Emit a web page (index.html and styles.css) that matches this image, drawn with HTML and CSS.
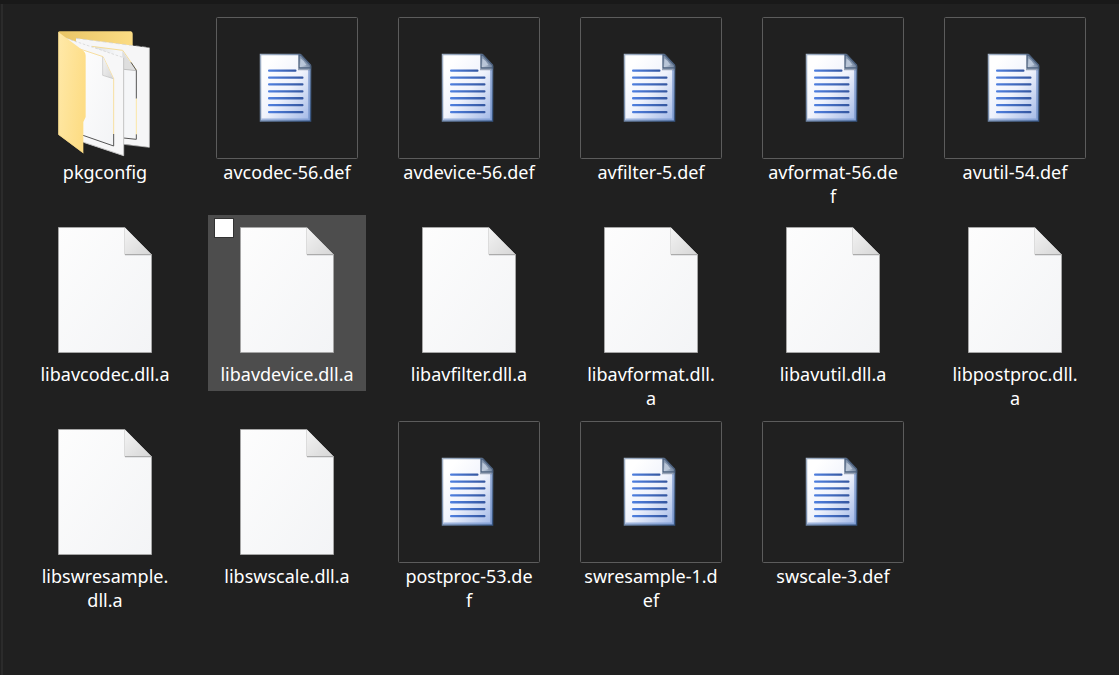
FILE: index.html
```
<!DOCTYPE html>
<html lang="en">
<head>
<meta charset="utf-8">
<title>lib</title>
<link rel="stylesheet" href="styles.css">
</head>
<body>
<svg class="defs" aria-hidden="true">
  <defs>
    <linearGradient id="paper" x1="0" y1="0" x2="1" y2="1"><stop offset="0" stop-color="#fdfdfd"/><stop offset="1" stop-color="#f3f4f6"/></linearGradient>
    <linearGradient id="fold" x1="0" y1="0" x2="1" y2="1"><stop offset="0" stop-color="#f4f4f4"/><stop offset="1" stop-color="#d6d6d6"/></linearGradient>
    <linearGradient id="page" x1="0.2" y1="0.1" x2="1" y2="1"><stop offset="0" stop-color="#ffffff"/><stop offset="0.45" stop-color="#f0f3fc"/><stop offset="1" stop-color="#9fb6e6"/></linearGradient>
    <linearGradient id="edge" x1="0" y1="0" x2="1" y2="1"><stop offset="0" stop-color="#a3b2c6"/><stop offset="1" stop-color="#35537f"/></linearGradient>
    <linearGradient id="curl" x1="0" y1="1" x2="1" y2="0"><stop offset="0" stop-color="#d5deeb"/><stop offset="0.5" stop-color="#7d8fa8"/><stop offset="1" stop-color="#26374c"/></linearGradient>
    <linearGradient id="rule" x1="0" y1="0" x2="1" y2="0"><stop offset="0" stop-color="#4f80e0"/><stop offset="1" stop-color="#34569f"/></linearGradient>
    <linearGradient id="back" x1="0" y1="0" x2="1" y2="0"><stop offset="0" stop-color="#e9c566"/><stop offset="1" stop-color="#fbdc84"/></linearGradient>
    <linearGradient id="front" x1="0" y1="0" x2="1" y2="0.4"><stop offset="0" stop-color="#ffe9a9"/><stop offset="1" stop-color="#fddd86"/></linearGradient>
    <linearGradient id="sheet" x1="0" y1="0" x2="1" y2="0"><stop offset="0" stop-color="#dcdee0"/><stop offset="0.5" stop-color="#f5f6f8"/></linearGradient>
    <symbol id="file" viewBox="0 0 142 142">
      <path d="M24.500 8.500H91L117.500 35.500V133.500H24.500Z" fill="url(#paper)"/>
      <path d="M91 8.500H24.500V133.500H117.500V35.500" fill="none" stroke="#a6a6a6"/>
      <path d="M90.500 9L117.500 35.500H90.500Z" fill="url(#fold)"/>
      <path d="M90.500 9V35.500" stroke="#dcdcdc"/>
      <path d="M91 35.500H117.500" stroke="#ababab"/>
      <path d="M91 36.500H117" stroke="#e3e4e6"/>
    </symbol>
    <symbol id="def" viewBox="0 0 142 142">
      <rect x="0.500" y="0.500" width="141" height="141" rx="1" fill="none" stroke="#5c5c5c"/>
      <path d="M44.500 37.500H84L94.500 49V104H44.500Z" fill="url(#page)" stroke="url(#edge)" stroke-width="1.500"/>
      <path d="M45.500 102.500H93V53" fill="none" stroke="#6f8fc8" stroke-opacity="0.600" stroke-width="2"/>
      <path d="M82 52.500H94" stroke="#2c4262" stroke-opacity="0.450" stroke-width="1.500"/>
      <path d="M83 38H85L94.500 48V51H83Z" fill="url(#curl)" stroke="#4a5f7c" stroke-width="1.300"/>
      <path d="M84.500 41.500Q88 43.500 90.500 48Q87 49.500 84.500 49Z" fill="#b9c6d8"/>
      <g fill="url(#rule)">
        <rect x="52" y="52.500" width="28.500" height="2.300" rx="1"/>
        <rect x="52" y="59.400" width="35.500" height="2.300" rx="1"/>
        <rect x="52" y="66.300" width="35.500" height="2.300" rx="1"/>
        <rect x="52" y="73.200" width="35.500" height="2.300" rx="1"/>
        <rect x="52" y="80.100" width="35.500" height="2.300" rx="1"/>
        <rect x="52" y="87" width="35.500" height="2.300" rx="1"/>
        <rect x="52" y="93.900" width="35.500" height="2.300" rx="1"/>
      </g>
    </symbol>
    <symbol id="folder" viewBox="-33 -9 426 426">
      <path d="M40 38Q40 34 44 34H258Q263 36 263 41V90H80Z" fill="url(#back)"/>
      <path d="M93 55L313 83V382L236 372L93 340Z" fill="#f6f6f7"/>
      <path d="M93 55L313 83" stroke="#d0d0d0" stroke-width="2" stroke-dasharray="12 8"/>
      <path d="M313 84V382L236 373" fill="none" stroke="#d2d2d2" stroke-width="2"/>
      <path d="M150 80L233 91L274 150V357L236 354Z" fill="url(#sheet)"/>
      <path d="M140 79L233 91L274 150" fill="none" stroke="#f4dc98" stroke-width="3"/>
      <path d="M232 92V148L274 152Z" fill="#dedede"/>
      <path d="M236 148L274 152" stroke="#aaa" stroke-width="2"/>
      <path d="M258 127L274 151V236" fill="none" stroke="#555" stroke-width="3"/>
      <path d="M274 236V344" stroke="#fae6a6" stroke-width="3"/>
      <path d="M274 343V358L236 354" fill="none" stroke="#555" stroke-width="3"/>
      <path d="M64 55L236 113V407L112 366Z" fill="#f7f7f8"/>
      <path d="M64 55L236 113" stroke="#cfcfcf" stroke-width="2" stroke-dasharray="8 5"/>
      <path d="M236 113V407L116 367" fill="none" stroke="#c3c3c3" stroke-width="3"/>
      <path d="M110 89L174 110L206 176V378L112 345Z" fill="url(#paper)"/>
      <path d="M105 87L174 110L206 176V343" fill="none" stroke="#f7dfa0" stroke-width="3"/>
      <path d="M174 111V166L205 176Z" fill="url(#fold)"/>
      <path d="M173 111V166L205 176" fill="none" stroke="#bdbdbd" stroke-width="2"/>
      <path d="M206 342V378L114 346" fill="none" stroke="#555" stroke-width="3"/>
      <path d="M40 36L108 87Q122 95 122 107V291L115 306V400L40 344Z" fill="url(#front)"/>
      <path d="M41 37V343L115 399" fill="none" stroke="#f5d684" stroke-width="2"/>
    </symbol>
  </defs>
</svg>
<main class="files">
  <ul class="grid">
    <li class="item"><svg class="thumb" aria-hidden="true"><use href="#folder"/></svg><span class="name">pkgconfig</span></li>
    <li class="item"><svg class="thumb" aria-hidden="true"><use href="#def"/></svg><span class="name">avcodec-56.def</span></li>
    <li class="item"><svg class="thumb" aria-hidden="true"><use href="#def"/></svg><span class="name">avdevice-56.def</span></li>
    <li class="item"><svg class="thumb" aria-hidden="true"><use href="#def"/></svg><span class="name">avfilter-5.def</span></li>
    <li class="item"><svg class="thumb" aria-hidden="true"><use href="#def"/></svg><span class="name">avformat-56.de<br>f</span></li>
    <li class="item"><svg class="thumb" aria-hidden="true"><use href="#def"/></svg><span class="name">avutil-54.def</span></li>
    <li class="item"><svg class="thumb" aria-hidden="true"><use href="#file"/></svg><span class="name">libavcodec.dll.a</span></li>
    <li class="item hovered"><input class="pick" type="checkbox" id="pick-avdevice"><svg class="thumb" aria-hidden="true"><use href="#file"/></svg><label class="name" for="pick-avdevice">libavdevice.dll.a</label></li>
    <li class="item"><svg class="thumb" aria-hidden="true"><use href="#file"/></svg><span class="name">libavfilter.dll.a</span></li>
    <li class="item"><svg class="thumb" aria-hidden="true"><use href="#file"/></svg><span class="name">libavformat.dll.<br>a</span></li>
    <li class="item"><svg class="thumb" aria-hidden="true"><use href="#file"/></svg><span class="name">libavutil.dll.a</span></li>
    <li class="item"><svg class="thumb" aria-hidden="true"><use href="#file"/></svg><span class="name">libpostproc.dll.<br>a</span></li>
    <li class="item"><svg class="thumb" aria-hidden="true"><use href="#file"/></svg><span class="name">libswresample.<br>dll.a</span></li>
    <li class="item"><svg class="thumb" aria-hidden="true"><use href="#file"/></svg><span class="name">libswscale.dll.a</span></li>
    <li class="item"><svg class="thumb" aria-hidden="true"><use href="#def"/></svg><span class="name">postproc-53.de<br>f</span></li>
    <li class="item"><svg class="thumb" aria-hidden="true"><use href="#def"/></svg><span class="name">swresample-1.d<br>ef</span></li>
    <li class="item"><svg class="thumb" aria-hidden="true"><use href="#def"/></svg><span class="name">swscale-3.def</span></li>
  </ul>
</main>
</body>
</html>
```
FILE: styles.css
```
* { box-sizing: border-box; }
body {
  margin: 0;
  min-height: 100vh;
  display: flex;
  background: #202020;
  color: #fff;
  font-family: "Noto Sans", "Open Sans", sans-serif;
  font-size: 18px;
  line-height: 24px;
  border-top: 4px solid #191919;
}
.defs { position: absolute; width: 0; height: 0; }
.files {
  flex: 1;
  margin-left: 1px;
  border-left: 2px solid #2b2b2b;
  padding: 9px 0 9px 23px;
}
.grid {
  display: grid;
  grid-template-columns: repeat(auto-fill, 158px);
  gap: 2px 24px;
  align-items: start;
  list-style: none;
  margin: 0;
  padding: 0;
}
.item {
  position: relative;
  display: flex;
  flex-direction: column;
  align-items: center;
  padding: 4px 8px 5px;
}
.hovered { background: #4d4d4d; }
.thumb { width: 142px; height: 142px; margin-bottom: 1px; }
.name { text-align: center; white-space: nowrap; }
.pick {
  appearance: none;
  position: absolute;
  left: 6px;
  top: 3px;
  width: 20px;
  height: 20px;
  margin: 0;
  background: #fff;
  border: 1px solid #333;
}
```
